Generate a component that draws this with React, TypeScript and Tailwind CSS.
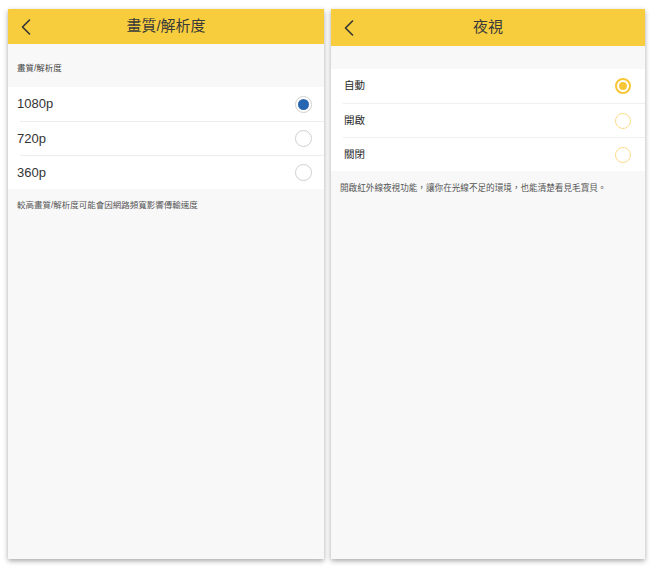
import React from 'react';

const font = { fontFamily: '"Liberation Sans", "Noto Sans CJK TC", sans-serif' };

function Chevron() {
  return (
    <svg width="10" height="16" viewBox="0 0 10 16" fill="none">
      <polyline points="8.5,1 1.5,8 8.5,15" stroke="#333" strokeWidth="1.6" strokeLinecap="round" strokeLinejoin="round" />
    </svg>
  );
}

function Header({ title, h }: { title: string; h: string }) {
  return (
    <div className={`relative flex ${h} items-center justify-center bg-[#f8cd3d]`}>
      <div className="absolute left-[13px] top-1/2 -translate-y-1/2">
        <Chevron />
      </div>
      <span className="text-[15px] text-[#3a3a3a]">{title}</span>
    </div>
  );
}

function BlueRadio({ on }: { on: boolean }) {
  return (
    <div className="flex h-[17px] w-[17px] items-center justify-center rounded-full border border-[#cfcfcf] bg-white">
      {on && <div className="h-[11px] w-[11px] rounded-full bg-[#2866b1]" />}
    </div>
  );
}

function YellowRadio({ on }: { on: boolean }) {
  return on ? (
    <div className="flex h-[16px] w-[16px] items-center justify-center rounded-full border-2 border-[#f7c637] bg-white">
      <div className="h-[8px] w-[8px] rounded-full bg-[#f7c637]" />
    </div>
  ) : (
    <div className="h-[16px] w-[16px] rounded-full border-[1.5px] border-[#fcdc8c] bg-white" />
  );
}

const resolutions = ['1080p', '720p', '360p'];
const modes = ['自動', '開啟', '關閉'];

export default function App() {
  return (
    <div className="flex h-[567px] w-[650px] gap-[7px] bg-white pl-[8px] pt-[9px]" style={font}>
      <div className="flex h-[550px] w-[316px] flex-col bg-[#f8f8f8] shadow-[0_2px_5px_rgba(0,0,0,0.35)]">
        <Header title="畫質/解析度" h="h-[35px]" />
        <div className="flex h-[43px] items-end pb-[12px] pl-[9px] text-[8.5px] text-[#444]">畫質/解析度</div>
        <div className="bg-white">
          {resolutions.map((r, i) => (
            <div key={r} className="flex h-[34px] items-center pl-[12px]">
              <div className={`flex h-full flex-1 items-center justify-between pr-[12px] ${i > 0 ? 'border-t border-[#ececec]' : ''}`}>
                <span className="-ml-[3px] text-[13px] text-[#333]">{r}</span>
                <BlueRadio on={i === 0} />
              </div>
            </div>
          ))}
        </div>
        <div className="pl-[9px] pt-[10px] text-[8.5px] text-[#555]">較高畫質/解析度可能會因網路頻寬影響傳輸速度</div>
      </div>

      <div className="flex h-[550px] w-[314px] flex-col bg-[#f8f8f8] shadow-[0_2px_5px_rgba(0,0,0,0.35)]">
        <Header title="夜視" h="h-[37px]" />
        <div className="h-[23px]" />
        <div className="bg-white">
          {modes.map((m, i) => (
            <div key={m} className="flex h-[34px] items-center pl-[12px]">
              <div className={`flex h-full flex-1 items-center justify-between pr-[14px] ${i > 0 ? 'border-t border-[#efefef]' : ''}`}>
                <span className="ml-[1px] text-[10.5px] text-[#2a2a2a]">{m}</span>
                <YellowRadio on={i === 0} />
              </div>
            </div>
          ))}
        </div>
        <div className="pl-[9px] pt-[11px] text-[8.6px] text-[#555]">開啟紅外線夜視功能，讓你在光線不足的環境，也能清楚看見毛寶貝。</div>
      </div>
    </div>
  );
}
